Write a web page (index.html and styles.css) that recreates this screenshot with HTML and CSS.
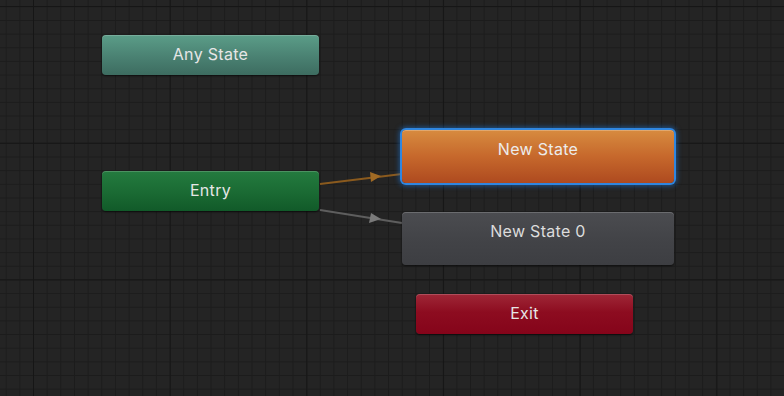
FILE: index.html
```html
<!DOCTYPE html>
<html lang="en">
<head>
    <meta charset="UTF-8">
    <meta name="viewport" content="width=device-width, initial-scale=1.0">
    <title>Animator</title>
    <link rel="stylesheet" href="styles.css">
</head>
<body>

    <div class="graph">
        <!-- transitions from Entry -->
        <svg class="links" width="784" height="396" viewBox="0 0 784 396">
            <line x1="320" y1="184" x2="402" y2="174" stroke="#8a5a1e" stroke-width="2"/>
            <polygon points="381,176 370,172 371,182" fill="#a06a24"/>
            <line x1="320" y1="210" x2="402" y2="223" stroke="#5e5e5e" stroke-width="2"/>
            <polygon points="381,219 371,213 369,223" fill="#7a7a7a"/>
        </svg>

        <div class="node any-state" style="left:102px; top:35px;">Any State</div>
        <div class="node entry" style="left:102px; top:171px;">Entry</div>
        <div class="node state default selected" style="left:402px; top:130px;">New State</div>
        <div class="node state" style="left:402px; top:212px;">New State 0</div>
        <div class="node exit" style="left:416px; top:294px;">Exit</div>
    </div>

</body>
</html>
```
FILE: styles.css
```css
html, body {
    margin: 0;
    padding: 0;
    overflow: hidden;
}
body {
    font-family: Inter, "Noto Sans", sans-serif;
    background: #232323;
}
.graph {
    position: relative;
    width: 784px;
    height: 396px;
    background-color: #242424;
    background-image:
        linear-gradient(to right, #161616 1px, transparent 1px),
        linear-gradient(to bottom, #161616 1px, transparent 1px),
        linear-gradient(to right, #1c1c1c 1px, transparent 1px),
        linear-gradient(to bottom, #1c1c1c 1px, transparent 1px);
    background-size: 136.7px 136.7px, 136.7px 136.7px, 13.67px 13.67px, 13.67px 13.67px;
    background-position: 33px 6px, 33px 6px, 5.7px 6.3px, 5.7px 6.3px;
}
.links {
    position: absolute;
    left: 0;
    top: 0;
}
.node {
    position: absolute;
    box-sizing: border-box;
    width: 217px;
    height: 40px;
    border-radius: 4px;
    color: #e6e6e6;
    font-size: 16px;
    letter-spacing: 0.3px;
    line-height: 38px;
    text-align: center;
    box-shadow: inset 0 1px 0 rgba(255, 255, 255, 0.18), 0 1px 2px rgba(0, 0, 0, 0.6);
}
.any-state {
    background: linear-gradient(to bottom, #5b9d88, #4a8172 55%, #3d6c60);
}
.entry {
    background: linear-gradient(to bottom, #247b3f, #1a6a33 55%, #115a29);
}
.exit {
    background: linear-gradient(to bottom, #9f2737, #8d0c20 45%, #85041a);
}
.state {
    width: 272px;
    height: 53px;
    background: linear-gradient(to bottom, #4b4c50, #424347 55%, #3d3e42);
    color: #dcdcdc;
}
.state.default {
    background: linear-gradient(to bottom, #d78b3f, #c6682c 50%, #ae4a1f);
    color: #ececec;
}
.state.selected {
    box-shadow: inset 0 1px 0 rgba(255, 255, 255, 0.25),
        0 0 0 2px #2f86e0,
        0 0 5px 3px rgba(30, 120, 220, 0.55);
}
```
